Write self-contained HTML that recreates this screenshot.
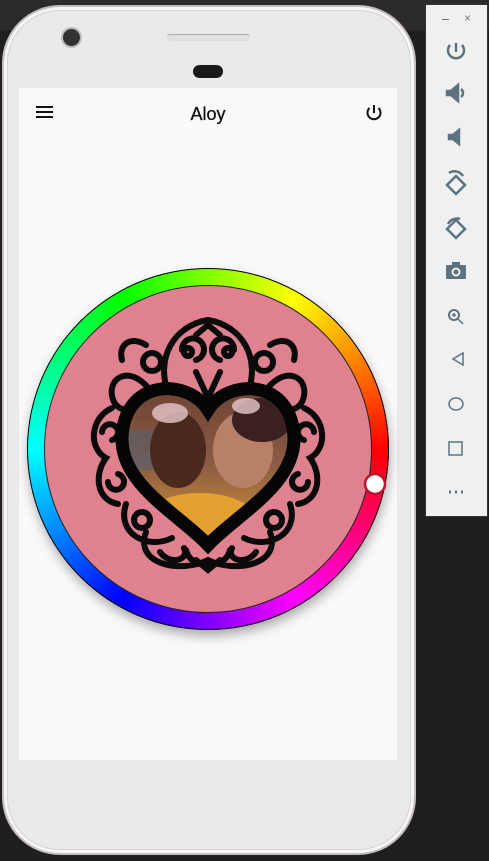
<!DOCTYPE html>
<html><head><meta charset="utf-8"><style>
html,body{margin:0;padding:0;width:489px;height:861px;overflow:hidden;background:#1f1f1f;font-family:"Liberation Sans",sans-serif;}
.top{position:absolute;left:0;top:0;width:489px;height:30px;background:#2b2b2b;}
.phone{position:absolute;left:2px;top:5px;width:414px;height:850px;border-radius:58px;background:#e9eaec;border:2px solid #c4bcbf;box-sizing:border-box;box-shadow:inset 0 0 0 3px #f6f6f7,inset 0 0 0 4px #d8d4d6;}
.screen{position:absolute;left:19px;top:88px;width:378px;height:672px;background:#f9f9fa;}
.title{position:absolute;left:0;width:378px;top:16px;text-align:center;font-size:18px;color:#111;-webkit-text-stroke:0.3px #111;}
.panel{position:absolute;left:425px;top:4px;width:63px;height:513px;background:#f0f0f0;border:1px solid #333;box-sizing:border-box;}
</style></head><body>
<div class="top"></div>
<div class="phone"></div>
<div style="position:absolute;left:63px;top:29px;width:17px;height:17px;border-radius:50%;background:#333;box-shadow:0 0 0 2px #bbb"></div>
<div style="position:absolute;left:167px;top:34px;width:83px;height:6px;border-radius:3px;background:#e0e0e2;border-top:1px solid #aaa"></div>
<div style="position:absolute;left:193px;top:65px;width:30px;height:13px;border-radius:7px;background:#1a1a1a"></div>
<div class="screen">
  <div style="position:absolute;left:17px;top:18px;width:17px;height:2px;background:#111;box-shadow:0 5px 0 #111,0 10px 0 #111"></div>
  <div class="title">Aloy</div>
  <svg style="position:absolute;left:345px;top:15px" width="20" height="20" viewBox="0 0 20 20"><path d="M10 2v8M5.5 5a6.5 6.5 0 1 0 9 0" fill="none" stroke="#111" stroke-width="2"/></svg>
</div>
<svg style="position:absolute;left:0;top:0" width="420" height="861">
  <defs>
    <filter id="sh" x="-20%" y="-20%" width="140%" height="140%"><feGaussianBlur stdDeviation="6"/></filter>
    <clipPath id="hc"><path d="M208,410 C188,378 124,378 122,438 C121,485 180,515 208,545 C236,515 295,485 294,438 C292,378 228,378 208,410 Z"/></clipPath>
    <linearGradient id="ph" x1="0" y1="0" x2="0" y2="1"><stop offset="0" stop-color="#6a4030"/><stop offset=".5" stop-color="#8a5a45"/><stop offset="1" stop-color="#e0a030"/></linearGradient>
  </defs>
  <circle cx="209" cy="455" r="180" fill="#000" opacity=".35" filter="url(#sh)"/>
</svg>
<div style="position:absolute;left:27px;top:268px;width:362px;height:362px;border-radius:50%;background:conic-gradient(#80ff00,#ffff00 30deg,#ff8000 60deg,#ff0000 90deg,#ff0080 120deg,#ff00ff 150deg,#8000ff 180deg,#0000ff 210deg,#0080ff 240deg,#00ffff 270deg,#00ff80 300deg,#00ff00 330deg,#80ff00);box-shadow:0 0 0 1px #000 inset"></div>
<div style="position:absolute;left:44px;top:285px;width:328px;height:328px;border-radius:50%;background:#e0818f;border:1px solid #222;box-sizing:border-box"></div>
<svg style="position:absolute;left:0;top:0" width="420" height="861">
  <g fill="none" stroke="#0a0a0a" stroke-width="6" stroke-linecap="round">
    <path d="M168,392 C156,360 172,326 208,320 C244,326 260,360 248,392"/>
    <path d="M182,350 a11,11 0 1 1 14,10"/><path d="M234,350 a11,11 0 1 0 -14,10"/>
    <circle cx="188" cy="352" r="4"/><circle cx="228" cy="352" r="4"/>
    <path d="M196,372 L208,398 L220,372"/><path d="M196,335 L208,325 L220,335"/>
    <path d="M150,390 C128,362 104,380 114,402 C122,416 140,408 136,396"/>
    <path d="M266,390 C288,362 312,380 302,402 C294,416 276,408 280,396"/>
    <circle cx="152" cy="362" r="9"/><circle cx="264" cy="362" r="9"/>
    <path d="M146,345 C130,335 118,345 122,360"/><path d="M270,345 C286,335 298,345 294,360"/>
    <path d="M112,408 C90,418 88,448 106,458 C94,474 96,500 118,504"/>
    <path d="M102,432 a8,8 0 1 1 10,8"/><path d="M108,482 a8,8 0 1 0 10,-8"/>
    <path d="M304,408 C326,418 328,448 310,458 C322,474 320,500 298,504"/>
    <path d="M314,432 a8,8 0 1 0 -10,8"/><path d="M308,482 a8,8 0 1 1 -10,-8"/>
    <path d="M126,504 C116,534 148,550 172,538"/>
    <path d="M290,504 C300,534 268,550 244,538"/>
    <path d="M146,532 C134,564 180,574 208,560 C236,574 282,564 270,532"/>
    <circle cx="142" cy="520" r="8"/><circle cx="274" cy="520" r="8"/>
    <path d="M186,550 C190,570 226,570 230,550"/>
    <path d="M196,560 L208,570 L220,560"/>
    <path d="M160,552 C170,566 190,560 184,548"/><path d="M256,552 C246,566 226,560 232,548"/>
  </g>
  <g clip-path="url(#hc)">
    <rect x="118" y="375" width="180" height="175" fill="url(#ph)"/>
    <rect x="118" y="430" width="40" height="40" fill="#556070" opacity=".6"/>
    <ellipse cx="178" cy="450" rx="28" ry="38" fill="#4a2a1c"/>
    <ellipse cx="243" cy="450" rx="30" ry="38" fill="#b98068"/>
    <ellipse cx="262" cy="420" rx="30" ry="22" fill="#3a2020"/>
    <ellipse cx="170" cy="413" rx="18" ry="10" fill="#e8c8cc" opacity=".8"/>
    <ellipse cx="246" cy="406" rx="14" ry="8" fill="#e8c8cc" opacity=".8"/>
    <ellipse cx="200" cy="525" rx="60" ry="32" fill="#e4a030"/>
  </g>
  <path d="M208,410 C188,378 124,378 122,438 C121,485 180,515 208,545 C236,515 295,485 294,438 C292,378 228,378 208,410 Z" fill="none" stroke="#050505" stroke-width="13"/>
  <circle cx="375" cy="484" r="10" fill="#fff" stroke="#c0102a" stroke-width="2.5"/>
</svg>
<div class="panel">
  <div style="position:absolute;left:16px;top:14px;width:7px;height:1px;background:#777"></div>
  <div style="position:absolute;left:38px;top:6px;font-size:12px;color:#777">×</div>
  <svg width="61" height="511" viewBox="0 0 61 511" style="position:absolute;left:0;top:0" fill="none" stroke="#5d7380" stroke-width="2.5">
    <path d="M30 38v9M24 40a8 8 0 1 0 12 0"/>
    <path d="M21 86h4l7-6v16l-7-6h-4z" fill="#5d7380"/><path d="M35 84a5 5 0 0 1 0 8"/>
    <path d="M23 130h4l6-5v14l-6-5h-4z" fill="#5d7380"/>
    <path d="M21 180l9-9 9 9-9 9z"/><path d="M23 168a10 10 0 0 1 14 3"/>
    <path d="M21 224l9-9 9 9-9 9z"/><path d="M22 219a10 10 0 0 1 12-5"/>
    <rect x="20" y="260" width="20" height="14" rx="1" fill="#5d7380" stroke="none"/><rect x="26" y="257" width="8" height="4" fill="#5d7380" stroke="none"/><circle cx="30" cy="267" r="3.5" stroke="#f0f0f0" stroke-width="2"/>
    <circle cx="28" cy="310" r="5" stroke-width="2"/><path d="M32 314l5 5M26 310h4M28 308v4" stroke-width="1.5"/>
    <path d="M37 348v12l-10-6z" stroke-width="1.5"/>
    <ellipse cx="30" cy="399" rx="7" ry="6" stroke-width="1.5"/>
    <rect x="23" y="437" width="13" height="13" stroke-width="1.5"/>
    <path d="M23 487h2M29 487h2M35 487h2" stroke-width="3"/>
  </svg>
</div>
</body></html>
